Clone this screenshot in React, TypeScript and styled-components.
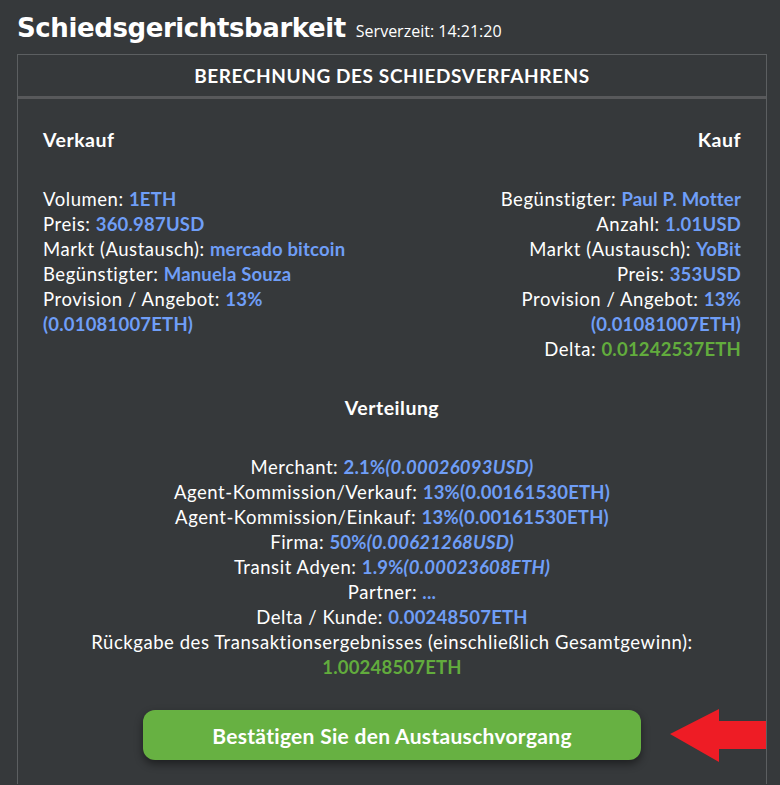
import React from 'react';
import styled, { createGlobalStyle } from 'styled-components';

const GlobalStyle = createGlobalStyle`
  html, body {
    margin: 0;
    padding: 0;
    background: #36393b;
  }
  body {
    font-family: Lato, "Open Sans", sans-serif;
    color: #ffffff;
  }
`;

type Value = { text: string; italic?: boolean };
type Row = { label?: string; values: Value[]; tone?: 'blue' | 'green' };

const sellRows: Row[] = [
  { label: 'Volumen:', values: [{ text: '1ETH' }] },
  { label: 'Preis:', values: [{ text: '360.987USD' }] },
  { label: 'Markt (Austausch):', values: [{ text: 'mercado bitcoin' }] },
  { label: 'Begünstigter:', values: [{ text: 'Manuela Souza' }] },
  { label: 'Provision / Angebot:', values: [{ text: '13%' }] },
  { values: [{ text: '(0.01081007ETH)' }] },
];

const buyRows: Row[] = [
  { label: 'Begünstigter:', values: [{ text: 'Paul P. Motter' }] },
  { label: 'Anzahl:', values: [{ text: '1.01USD' }] },
  { label: 'Markt (Austausch):', values: [{ text: 'YoBit' }] },
  { label: 'Preis:', values: [{ text: '353USD' }] },
  { label: 'Provision / Angebot:', values: [{ text: '13%' }] },
  { values: [{ text: '(0.01081007ETH)' }] },
  { label: 'Delta:', values: [{ text: '0.01242537ETH' }], tone: 'green' },
];

const shareRows: Row[] = [
  { label: 'Merchant:', values: [{ text: '2.1%' }, { text: '(0.00026093USD)', italic: true }] },
  { label: 'Agent-Kommission/Verkauf:', values: [{ text: '13%(0.00161530ETH)' }] },
  { label: 'Agent-Kommission/Einkauf:', values: [{ text: '13%(0.00161530ETH)' }] },
  { label: 'Firma:', values: [{ text: '50%' }, { text: '(0.00621268USD)', italic: true }] },
  { label: 'Transit Adyen:', values: [{ text: '1.9%' }, { text: '(0.00023608ETH)', italic: true }] },
  { label: 'Partner:', values: [{ text: '...' }] },
  { label: 'Delta / Kunde:', values: [{ text: '0.00248507ETH' }] },
  { label: 'Rückgabe des Transaktionsergebnisses (einschließlich Gesamtgewinn):', values: [] },
  { values: [{ text: '1.00248507ETH' }], tone: 'green' },
];

const InfoLine: React.FC<{ row: Row }> = ({ row }) => (
  <Line>
    {row.label && `${row.label}${row.values.length ? ' ' : ''}`}
    {row.values.map((v, i) => (
      <Amount key={i} tone={row.tone ?? 'blue'} italic={v.italic}>
        {v.text}
      </Amount>
    ))}
  </Line>
);

const Arrow = () => (
  <ArrowSvg width="96" height="53" viewBox="0 0 96 53">
    <path d="M0 25 L49 0 L49 12 L96 12 L96 40 L49 40 L49 53 Z" fill="#ee1c25" />
  </ArrowSvg>
);

export default function App() {
  return (
    <>
      <GlobalStyle />
      <Page>
        <TitleRow>
          <Title>Schiedsgerichtsbarkeit</Title>
          <ServerTime>Serverzeit: 14:21:20</ServerTime>
        </TitleRow>
        <Panel>
          <PanelHeader>BERECHNUNG DES SCHIEDSVERFAHRENS</PanelHeader>
          <PanelBody>
            <Columns>
              <Column align="left">
                <ColumnTitle>Verkauf</ColumnTitle>
                {sellRows.map((r, i) => (
                  <InfoLine key={i} row={r} />
                ))}
              </Column>
              <Column align="right">
                <ColumnTitle>Kauf</ColumnTitle>
                {buyRows.map((r, i) => (
                  <InfoLine key={i} row={r} />
                ))}
              </Column>
            </Columns>
            <Distribution>
              <ColumnTitle>Verteilung</ColumnTitle>
              {shareRows.map((r, i) => (
                <InfoLine key={i} row={r} />
              ))}
            </Distribution>
            <Actions>
              <ConfirmButton type="button">Bestätigen Sie den Austauschvorgang</ConfirmButton>
              <Arrow />
            </Actions>
          </PanelBody>
        </Panel>
      </Page>
    </>
  );
}

const Page = styled.div`
  padding: 12px 13px 0 17px;
`;

const TitleRow = styled.div`
  display: flex;
  align-items: baseline;
  gap: 10px;
  height: 42px;
`;

const Title = styled.h1`
  margin: 0;
  font-family: "DejaVu Sans", sans-serif;
  font-weight: 700;
  font-size: 26px;
  letter-spacing: -0.4px;
  line-height: 32px;
  color: #ffffff;
`;

const ServerTime = styled.span`
  font-family: "Open Sans", sans-serif;
  font-size: 16px;
  color: #ffffff;
`;

const Panel = styled.div`
  border: 1px solid #5c5f61;
  border-bottom: none;
`;

const PanelHeader = styled.div`
  height: 41px;
  display: flex;
  align-items: center;
  justify-content: center;
  font-weight: 700;
  font-size: 19px;
  letter-spacing: 0.6px;
  border-bottom: 3px solid #58595b;
`;

const PanelBody = styled.div`
  padding: 28px 25px 24px;
`;

const Columns = styled.div`
  display: flex;
  justify-content: space-between;
`;

const Column = styled.div<{ align: 'left' | 'right' }>`
  text-align: ${({ align }) => align};
  width: 340px;
`;

const ColumnTitle = styled.div`
  font-weight: 700;
  font-size: 19.5px;
  letter-spacing: 0.5px;
  line-height: 25px;
  margin-bottom: 35px;
`;

const Line = styled.div`
  font-size: 18.5px;
  letter-spacing: 0.55px;
  line-height: 25px;
`;

const Amount = styled.span<{ tone: 'blue' | 'green'; italic?: boolean }>`
  font-weight: 700;
  letter-spacing: 0.2px;
  font-style: ${({ italic }) => (italic ? 'italic' : 'normal')};
  color: ${({ tone }) => (tone === 'green' ? '#62ac3d' : '#6f9ef7')};
`;

const Distribution = styled.div`
  text-align: center;
  margin-top: 33px;
`;

const Actions = styled.div`
  position: relative;
  display: flex;
  justify-content: center;
  margin-top: 30px;
`;

const ConfirmButton = styled.button`
  width: 498px;
  height: 50px;
  border: none;
  border-radius: 12px;
  background: #67b142;
  color: #ffffff;
  font-family: Lato, sans-serif;
  font-weight: 700;
  font-size: 21px;
  letter-spacing: 0.3px;
  box-shadow: 0 4px 8px rgba(0, 0, 0, 0.45);
  cursor: pointer;
`;

const ArrowSvg = styled.svg`
  position: absolute;
  right: -25px;
  top: -1px;
`;
